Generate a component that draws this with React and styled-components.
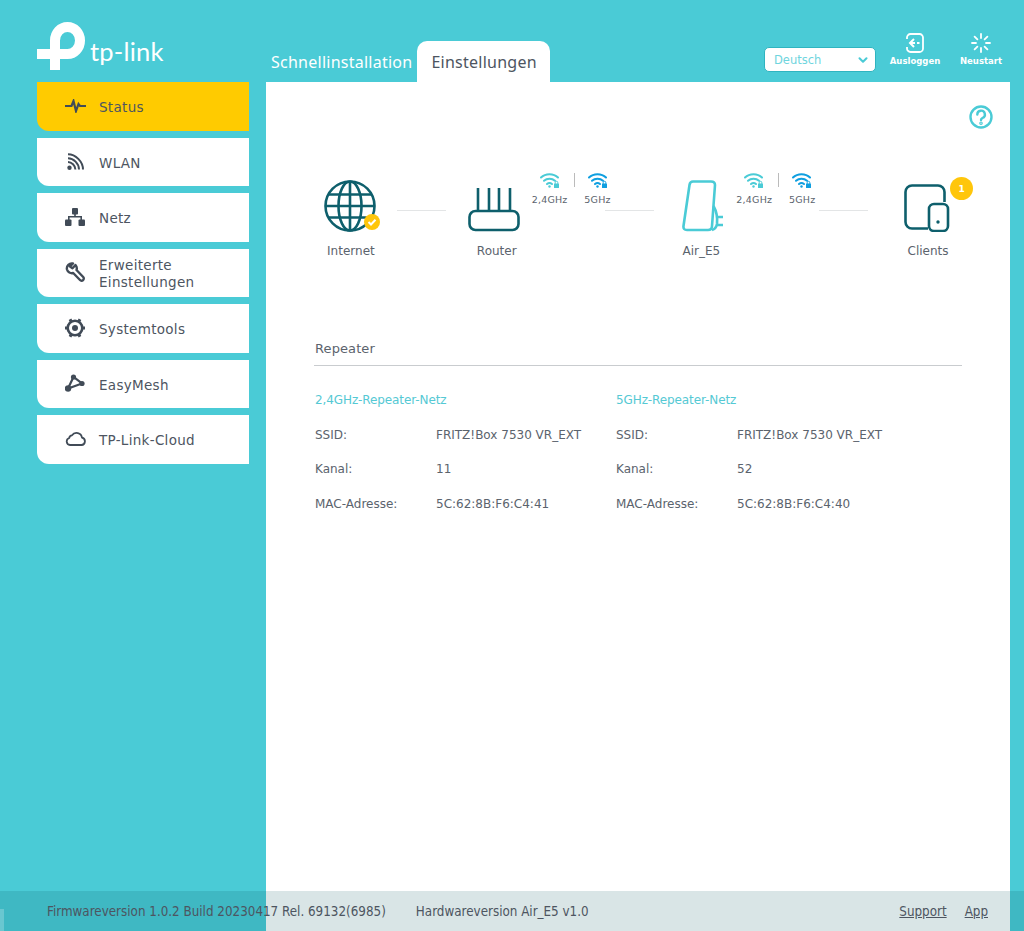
import React from 'react';
import styled, { createGlobalStyle } from 'styled-components';
import { ChevronDown } from 'lucide-react';

const GlobalStyle = createGlobalStyle`
  html, body {
    margin: 0;
    padding: 0;
    background: #4acbd6;
  }
  * {
    box-sizing: border-box;
  }
`;

const Page = styled.div`
  position: relative;
  width: 1024px;
  height: 931px;
  overflow: hidden;
  background: #4acbd6;
  font-family: "DejaVu Sans", Verdana, sans-serif;
  color: #4d5561;
`;

const Header = styled.header`
  display: flex;
  height: 82px;
  padding-left: 37px;
`;

const LogoWrap = styled.div`
  display: flex;
  width: 229px;
  padding-top: 22px;
  align-items: flex-start;
`;

const LogoText = styled.span`
  margin: 14px 0 0 5px;
  font-family: Lato, sans-serif;
  font-size: 25.5px;
  font-weight: 400;
  line-height: 30px;
  letter-spacing: 0.2px;
  color: #fff;
`;

const Tabs = styled.nav`
  display: flex;
  align-items: flex-end;
  height: 82px;
  padding-left: 5px;
`;

const Tab = styled.a`
  display: flex;
  align-items: center;
  height: 41px;
  padding: 0 14px 0 0;
  font-size: 16px;
  font-family: "Noto Sans", sans-serif;
  letter-spacing: 0.25px;
  color: #fff;
`;

const ActiveTab = styled(Tab)`
  padding: 0 13px 0 14px;
  margin-left: -9px;
  background: #fff;
  border-radius: 10px 10px 0 0;
  color: #4d5561;
`;

const TopRight = styled.div`
  display: flex;
  margin-left: auto;
  padding: 33px 22px 0 0;
  align-items: flex-start;
`;

const LangSelect = styled.div`
  display: flex;
  align-items: center;
  justify-content: space-between;
  width: 112px;
  height: 25px;
  margin: 14px 13px 0 0;
  padding: 0 5px 0 9px;
  background: #fff;
  border: 1px solid #2fb4c0;
  border-radius: 5px;
  font-size: 11.5px;
  color: #6fd5de;
`;

const TopAction = styled.a`
  display: flex;
  flex-direction: column;
  align-items: center;
  gap: 3px;
  width: ${(p) => p.$width}px;
  margin-right: ${(p) => p.$gap || 0}px;
  font-size: 8.5px;
  font-weight: bold;
  line-height: 11px;
  color: #fff;
`;

const Main = styled.div`
  display: flex;
  height: 849px;
  padding-left: 37px;
`;

const Sidebar = styled.aside`
  display: flex;
  flex-direction: column;
  gap: 7px;
  width: 212px;
`;

const NavItem = styled.a`
  display: flex;
  align-items: center;
  height: 48.5px;
  padding: 3px 0 0 27px;
  background: ${(p) => (p.$active ? '#ffcb00' : '#fff')};
  border-radius: 0 0 0 12px;
  font-size: 13.5px;
  line-height: 17px;
  letter-spacing: 0.3px;
  color: #4d5561;
`;

const NavIcon = styled.span`
  display: flex;
  justify-content: center;
  width: 22px;
  margin: 0 13px 4px 0;
  color: #414b57;
`;

const Content = styled.main`
  position: relative;
  width: 744px;
  margin-left: 17px;
  padding: 0 48px;
  background: #fff;
`;

const HelpIcon = styled.span`
  position: absolute;
  top: 23px;
  right: 17px;
  width: 24px;
  height: 24px;
`;

const Topology = styled.div`
  height: 183px;
  padding-top: 90px;
`;

const TopoRow = styled.div`
  display: flex;
  align-items: flex-start;
`;

const TopoNode = styled.div`
  position: relative;
  display: flex;
  flex-direction: column;
  align-items: center;
  width: ${(p) => p.$width}px;
  margin-left: ${(p) => p.$left || 0}px;
`;

const TopoIcon = styled.div`
  display: flex;
  align-items: flex-end;
  justify-content: center;
  height: 60px;
  margin-left: ${(p) => p.$shift || 0}px;
`;

const TopoLabel = styled.div`
  margin-top: 11px;
  padding-left: 2px;
  font-size: 12px;
  line-height: 16px;
  color: #5b636d;
`;

const Line = styled.div`
  flex: none;
  width: 49px;
  height: 1.5px;
  margin: 37.5px 0 0 ${(p) => p.$left || 0}px;
  background: #e3e5e6;
`;

const Band = styled.div`
  display: flex;
  flex-direction: column;
  align-items: center;
  gap: 5px;
  width: ${(p) => p.$width}px;
  font-size: 9.5px;
  line-height: 12px;
  letter-spacing: 0.2px;
  white-space: nowrap;
  color: #5b636d;
`;

const BandDivider = styled.div`
  flex: none;
  width: 1px;
  height: 14px;
  margin: 1px 7px 0 5px;
  background: #bbb;
`;

const CountBadge = styled.span`
  position: absolute;
  top: 5px;
  left: 58px;
  display: flex;
  align-items: center;
  justify-content: center;
  width: 23px;
  height: 23px;
  background: #ffc60b;
  border-radius: 50%;
  font-size: 9px;
  font-weight: bold;
  color: #fff;
`;

const SectionTitle = styled.h2`
  height: 26px;
  margin: 75px 0 0;
  padding-left: 1px;
  font-size: 13px;
  font-weight: normal;
  line-height: 17px;
  letter-spacing: 0.1px;
  color: #5b636d;
  border-bottom: 1px solid #c9cccf;
`;

const Networks = styled.div`
  display: flex;
  padding: 26px 0 0 1px;
`;

const Network = styled.section`
  width: 301px;
`;

const NetworkTitle = styled.h3`
  margin: 0 0 17.5px;
  font-size: 12px;
  font-weight: normal;
  line-height: 17px;
  letter-spacing: -0.1px;
  color: #55c9d4;
`;

const Row = styled.div`
  display: flex;
  height: 17px;
  margin-bottom: 17.5px;
  font-size: 12px;
  line-height: 17px;
  color: #5b636d;
`;

const RowLabel = styled.span`
  width: 121px;
`;

const Footer = styled.footer`
  position: absolute;
  left: 0;
  right: 0;
  bottom: 0;
  display: flex;
  align-items: center;
  height: 40px;
  padding: 0 36px 0 47px;
  background: rgba(0, 80, 90, 0.15);
  font-family: "DejaVu Sans Condensed", "DejaVu Sans", sans-serif;
  font-stretch: condensed;
  font-size: 13.3px;
  color: #4d5561;
`;

const FooterEdge = styled.span`
  position: absolute;
  left: 0;
  bottom: 0;
  width: 4px;
  height: 22px;
  background: rgba(255, 255, 255, 0.22);
`;

const FooterText = styled.span`
  margin-right: 30px;
`;

const FooterLinks = styled.div`
  display: flex;
  gap: 18px;
  margin-left: auto;
  & a {
    text-decoration: underline;
  }
`;

const Wifi = ({ color }) => (
  <svg width="20" height="17" viewBox="0 0 20 17" fill="none" stroke={color} strokeWidth="2" strokeLinecap="round">
    <path d="M1 5.5C5.5 1 13.5 1 18 5.500" />
    <path d="M4 8.800C7 6 12 6 15 8.800" />
    <path d="M7 12C8.500 10.700 10.500 10.700 12 12" />
    <circle cx="9.500" cy="14.500" r="1.200" fill={color} stroke="none" />
    <rect x="14" y="11.500" width="5" height="4.500" rx="0.500" fill={color} stroke="none" />
    <path d="M15.200 11.500V10.600A1.300 1.300 0 0 1 17.800 10.600V11.500" strokeWidth="1" fill="none" />
  </svg>
);

const Logo = () => (
  <svg width="48" height="48" viewBox="0 0 48 48" fill="none" stroke="#fff" strokeWidth="10">
    <path d="M0 32H23" />
    <path d="M18 27V48" />
    <path d="M18 33V18.500A12.500 13.500 0 1 1 30.500 32H22" />
  </svg>
);

const navIcons = {
  status: (
    <svg width="21" height="14" viewBox="0 0 21 14" fill="none" stroke="currentColor" strokeWidth="2.200">
      <path d="M0 7H6.500L8.500 2L11 12L13.500 5L15 7H21" />
    </svg>
  ),
  wlan: (
    <svg width="17" height="17" viewBox="0 0 17 17" fill="none" stroke="currentColor" strokeWidth="2">
      <path d="M1 1.200C8.500 1.200 16 8.500 16 16.500" />
      <path d="M1 5.200C6.500 5.200 12 10.500 12 16.500" />
      <path d="M1 9C4.500 9 8.400 12.500 8.400 16.500" />
      <circle cx="2.500" cy="14.800" r="2.200" fill="currentColor" stroke="none" />
    </svg>
  ),
  netz: (
    <svg width="20" height="18" viewBox="0 0 20 18" fill="currentColor">
      <rect x="7" y="0" width="6" height="6.500" rx="1" />
      <rect x="0" y="11.500" width="6.500" height="6.500" rx="1" />
      <rect x="13.500" y="11.500" width="6.500" height="6.500" rx="1" />
      <path d="M9.200 5h1.600v3H17v4h-1.600V9.500H4.600V12H3V8h6.200z" />
    </svg>
  ),
  tools: (
    <svg width="20" height="20" viewBox="0 0 20 20" fill="none" stroke="currentColor" strokeWidth="2.400" strokeLinejoin="round">
      <path d="M8 1.500A5 5 0 0 0 2 7.500A5 5 0 0 0 8.200 11L15 18A2 2 0 0 0 18.200 15L11.500 8A5 5 0 0 0 10.500 3L7.500 6.300L5 4.500z" />
    </svg>
  ),
  system: (
    <svg width="20" height="20" viewBox="0 0 20 20" fill="none" stroke="#414b57">
      <circle cx="10" cy="10" r="7.300" strokeWidth="2.600" />
      <path d="M17 10H20M0 10H3M13.500 3.900L15 1.300M6.500 3.900L5 1.300M13.500 16.100L15 18.700M6.500 16.100L5 18.700" strokeWidth="3" />
      <circle cx="10" cy="10" r="3" fill="#414b57" stroke="none" />
    </svg>
  ),
  mesh: (
    <svg width="20" height="18" viewBox="0 0 20 18" fill="none" stroke="currentColor" strokeWidth="2.200">
      <path d="M3 14.500L8.500 3L17 9.500z" />
      <circle cx="8.500" cy="3" r="2.600" fill="currentColor" stroke="none" />
      <circle cx="3" cy="14.500" r="3.200" fill="currentColor" stroke="none" />
      <circle cx="17" cy="9.500" r="2.600" fill="currentColor" stroke="none" />
    </svg>
  ),
  cloud: (
    <svg width="21" height="15" viewBox="0 0 21 15" fill="none" stroke="currentColor" strokeWidth="1.800" strokeLinejoin="round">
      <path d="M5 14H16.500A3.700 3.700 0 0 0 17 6.700A5.500 5.500 0 0 0 7 4.300A3.300 3.300 0 0 0 4.200 7A3.600 3.600 0 0 0 5 14z" />
    </svg>
  ),
};

const navItems = [
  { key: 'status', label: 'Status', active: true },
  { key: 'wlan', label: 'WLAN' },
  { key: 'netz', label: 'Netz' },
  { key: 'tools', label: <>Erweiterte<br />Einstellungen</> },
  { key: 'system', label: 'Systemtools' },
  { key: 'mesh', label: 'EasyMesh' },
  { key: 'cloud', label: 'TP-Link-Cloud' },
];

const networks = [
  { title: '2,4GHz-Repeater-Netz', channel: '11', mac: '5C:62:8B:F6:C4:41' },
  { title: '5GHz-Repeater-Netz', channel: '52', mac: '5C:62:8B:F6:C4:40' },
];

const BandPair = () => (
  <>
    <Band $width={38}>
      <Wifi color="#4acbd6" />
      <span>2,4GHz</span>
    </Band>
    <BandDivider />
    <Band $width={32}>
      <Wifi color="#0f9fe0" />
      <span>5GHz</span>
    </Band>
  </>
);

const App = () => {
  return (
    <Page>
      <GlobalStyle />
      <Header>
        <LogoWrap>
          <Logo />
          <LogoText>tp-link</LogoText>
        </LogoWrap>
        <Tabs>
          <Tab>Schnellinstallation</Tab>
          <ActiveTab>Einstellungen</ActiveTab>
        </Tabs>
        <TopRight>
          <LangSelect>
            Deutsch
            <ChevronDown size={14} strokeWidth={3.5} color="#4acbd6" />
          </LangSelect>
          <TopAction $width={52} $gap={19}>
            <svg width="18" height="20" viewBox="0 0 18 20" fill="none" stroke="#fff" strokeWidth="1.800">
              <path d="M1 6V4.500A3.500 3.500 0 0 1 4.500 1H13.500A3.500 3.500 0 0 1 17 4.500V15.500A3.500 3.500 0 0 1 13.500 19H4.500A3.500 3.500 0 0 1 1 15.500V14" />
              <path d="M8 6L4 10L8 14" strokeWidth="2" />
              <path d="M4 10H9M11 10H13.500" strokeWidth="2" />
            </svg>
            Ausloggen
          </TopAction>
          <TopAction $width={42}>
            <svg width="20" height="20" viewBox="0 0 20 20" fill="none" stroke="#fff" strokeWidth="1.800" strokeLinecap="round">
              <path d="M10 1V5M10 15V19M1 10H5M15 10H19M3.600 3.600L6.400 6.400M13.600 13.600L16.400 16.400M3.600 16.400L6.400 13.600M13.600 6.400L16.400 3.600" />
            </svg>
            Neustart
          </TopAction>
        </TopRight>
      </Header>
      <Main>
        <Sidebar>
          {navItems.map((item) => (
            <NavItem key={item.key} $active={item.active}>
              <NavIcon>{navIcons[item.key]}</NavIcon>
              <span>{item.label}</span>
            </NavItem>
          ))}
        </Sidebar>
        <Content>
          <HelpIcon>
            <svg width="24" height="24" viewBox="0 0 24 24" fill="none" stroke="#4acbd6" strokeWidth="2.400" strokeLinecap="round">
              <circle cx="12" cy="12" r="10.500" />
              <path d="M8.300 9.500A3.800 3.800 0 1 1 13.500 13C12.400 13.600 12 14.200 12 15" />
              <circle cx="12" cy="18.200" r="0.600" />
            </svg>
          </HelpIcon>
          <Topology>
            <TopoRow>
              <TopoNode $width={72}>
                <TopoIcon>
                  <svg width="54" height="52" viewBox="0 0 54 52" fill="none" stroke="#0e5f6c" strokeWidth="2.600" overflow="visible">
                    <circle cx="27" cy="26" r="24.500" />
                    <ellipse cx="27" cy="26" rx="11.500" ry="24.500" />
                    <path d="M27 1.500V50.500M5.500 14.500H48.500M3 26H51M5.500 37.500H48.500" />
                    <circle cx="49" cy="42" r="8" fill="#ffc60b" stroke="none" />
                    <path d="M45.500 42L48 44.500L52.500 39.800" stroke="#fff" strokeWidth="2" />
                  </svg>
                </TopoIcon>
                <TopoLabel>Internet</TopoLabel>
              </TopoNode>
              <Line $left={11} />
              <TopoNode $width={70} $left={15}>
                <TopoIcon $shift={-4}>
                  <svg width="52" height="44" viewBox="0 0 52 44" fill="none" stroke="#0e5f6c" strokeWidth="2.600">
                    <rect x="1.500" y="23" width="49" height="19" rx="6" />
                    <path d="M10 23V0M21 23V0M31 23V0M42 23V0" />
                  </svg>
                </TopoIcon>
                <TopoLabel>Router</TopoLabel>
              </TopoNode>
              <BandPair />
              <Line $left={-8} />
              <TopoNode $width={70} $left={11}>
                <TopoIcon $shift={6}>
                  <svg width="42" height="52" viewBox="0 0 42 52" fill="none" stroke="#4acbd6" strokeWidth="2.600" strokeLinejoin="round">
                    <path d="M11 1.500H29Q33 1.500 33 5L30 46Q30 50 26 50H5Q1 50 1.500 46L7.500 5Q8 1.500 11 1.500z" />
                    <path d="M31.500 26Q36 34 35 44Q34 49 30 50M35 37H41M35 45H41" />
                  </svg>
                </TopoIcon>
                <TopoLabel>Air_E5</TopoLabel>
              </TopoNode>
              <BandPair />
              <Line $left={1} />
              <TopoNode $width={70} $left={24}>
                <TopoIcon>
                  <svg width="46" height="48" viewBox="0 0 46 48" fill="none" stroke="#0e5f6c" strokeWidth="2.600">
                    <path d="M24 44.500H8A6.500 6.500 0 0 1 1.500 38V8A6.500 6.500 0 0 1 8 1.500H34A6.500 6.500 0 0 1 40.500 8V18" />
                    <rect x="25" y="20" width="19" height="27" rx="5" />
                    <circle cx="34" cy="38" r="1.700" fill="#0e5f6c" stroke="none" />
                  </svg>
                </TopoIcon>
                <TopoLabel>Clients</TopoLabel>
                <CountBadge>1</CountBadge>
              </TopoNode>
            </TopoRow>
          </Topology>
          <SectionTitle>Repeater</SectionTitle>
          <Networks>
            {networks.map((net) => (
              <Network key={net.title}>
                <NetworkTitle>{net.title}</NetworkTitle>
                <Row><RowLabel>SSID:</RowLabel><span>FRITZ!Box 7530 VR_EXT</span></Row>
                <Row><RowLabel>Kanal:</RowLabel><span>{net.channel}</span></Row>
                <Row><RowLabel>MAC-Adresse:</RowLabel><span>{net.mac}</span></Row>
              </Network>
            ))}
          </Networks>
        </Content>
      </Main>
      <Footer>
        <FooterEdge />
        <FooterText>Firmwareversion 1.0.2 Build 20230417 Rel. 69132(6985)</FooterText>
        <FooterText>Hardwareversion Air_E5 v1.0</FooterText>
        <FooterLinks>
          <a>Support</a>
          <a>App</a>
        </FooterLinks>
      </Footer>
    </Page>
  );
};

export default App;
